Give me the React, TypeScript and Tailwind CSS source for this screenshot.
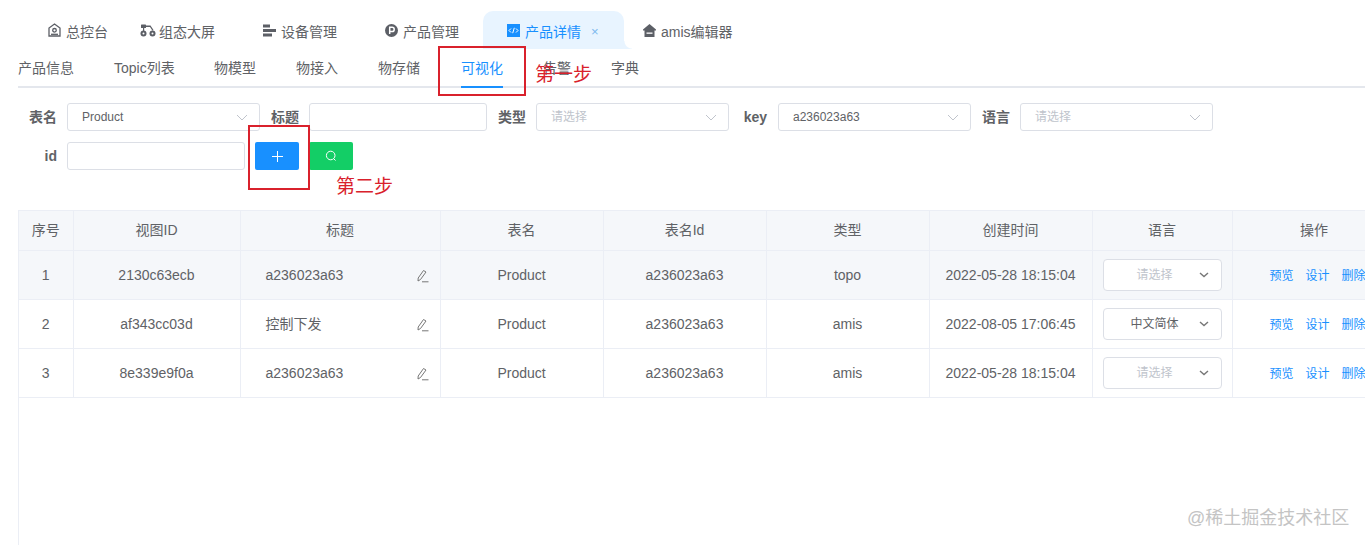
import React from "react";

const font = "[font-family:'Liberation_Sans','Noto_Sans_CJK_SC',sans-serif]";

function HomeDot() {
  return (
    <svg width="13" height="14" viewBox="0 0 13 14" fill="none" stroke="#5c5f66" strokeWidth="1.300">
      <path d="M6.500 1 12 5v8H1V5z" />
      <circle cx="6.500" cy="7.300" r="1.800" />
      <path d="M3 11.300h7" />
    </svg>
  );
}
function Topo() {
  return (
    <svg width="16" height="13" viewBox="0 0 16 13" fill="#5c5f66">
      <rect x="1" y="0.500" width="5" height="3.500" rx="0.600" />
      <path d="M3 4h1.200v3H3zM6 1.500h4.500l3 4.500-1 .7L10 3H6z" />
      <circle cx="3.500" cy="9.500" r="3" />
      <circle cx="12.500" cy="9.500" r="3" />
      <circle cx="3.500" cy="9.500" r="1" fill="#fff" />
      <circle cx="12.500" cy="9.500" r="1" fill="#fff" />
    </svg>
  );
}
function Bars() {
  return (
    <svg width="13" height="13" viewBox="0 0 13 13" fill="#5c5f66">
      <rect x="0" y="0.500" width="7" height="3" />
      <rect x="0" y="5" width="13" height="3" />
      <rect x="0" y="9.500" width="9" height="3" />
    </svg>
  );
}
function PCircle() {
  return (
    <svg width="13" height="13" viewBox="0 0 13 13">
      <circle cx="6.500" cy="6.500" r="6.500" fill="#5c5f66" />
      <path d="M4.700 10V3.300h2.400a2.100 2.100 0 0 1 0 4.200H4.700" fill="none" stroke="#fff" strokeWidth="1.500" />
    </svg>
  );
}
function CodeBox() {
  return (
    <svg width="13" height="13" viewBox="0 0 13 13">
      <rect width="13" height="13" fill="#1890ff" />
      <path d="M4 4.500 2 6.500l2 2M9 4.500l2 2-2 2M7.300 3.800 5.700 9.200" fill="none" stroke="#fff" strokeWidth="1" />
    </svg>
  );
}
function HomeFill() {
  return (
    <svg width="13" height="13" viewBox="0 0 13 13" fill="#5c5f66">
      <path d="M6.500 0 13 5.500v1H11.500V13h-10V6.500H0v-1z" />
      <rect x="3.500" y="8.500" width="6" height="1.300" fill="#fff" />
    </svg>
  );
}
function Chevron({ dark }: { dark?: boolean }) {
  return dark ? (
    <svg width="10" height="6" viewBox="0 0 10 6" fill="none" stroke="#777" strokeWidth="1.400">
      <path d="m1 1 4 3.600L9 1" />
    </svg>
  ) : (
    <svg width="12" height="7" viewBox="0 0 12 7" fill="none" stroke="#c0c4cc" strokeWidth="1">
      <path d="m1 1 5 5 5-5" />
    </svg>
  );
}
function Pencil() {
  return (
    <svg width="13" height="14" viewBox="0 0 13 14" fill="none" stroke="#777" strokeWidth="1">
      <path d="M7.500 1.500 10 3 4.500 10.500 2 12l.2-3z" />
      <path d="M6 12.800h6.500" />
    </svg>
  );
}

function Select({ value, placeholder, w }: { value?: string; placeholder?: string; w: string }) {
  return (
    <div className={`${w} h-[28px] flex items-center justify-between border border-[#dcdfe6] rounded-[3px] bg-white pl-[14px] pr-[11px] text-[12px] ${value ? "text-[#606266]" : "text-[#c0c4cc]"}`}>
      <span>{value ?? placeholder}</span>
      <Chevron />
    </div>
  );
}

function Label({ children, w }: { children: React.ReactNode; w: string }) {
  return <div className={`${w} text-right text-[14px] font-bold text-[#606266]`}>{children}</div>;
}

const rows = [
  { n: "1", id: "2130c63ecb", title: "a236023a63", type: "topo", time: "2022-05-28 18:15:04", lang: "", hl: true },
  { n: "2", id: "af343cc03d", title: "控制下发", type: "amis", time: "2022-08-05 17:06:45", lang: "中文简体", hl: false },
  { n: "3", id: "8e339e9f0a", title: "a236023a63", type: "amis", time: "2022-05-28 18:15:04", lang: "", hl: false },
];

const heads = ["序号", "视图ID", "标题", "表名", "表名Id", "类型", "创建时间", "语言", "操作"];
const cell = "border-r border-b border-[#ebeef5] text-center text-[14px] text-[#606266] p-0";
const textCell = "border-r border-b border-[#ebeef5] text-center text-[14px] text-[#606266] p-0 pt-[2px]";
const tabItem = "pt-[4px] flex items-center [&>svg]:-translate-y-[2px]";

export default function App() {
  return (
    <div className={`relative w-[1365px] h-[545px] overflow-hidden bg-white ${font}`}>
      {/* Top tabs */}
      <div className="flex h-[38px] pt-[11px] box-content items-center text-[14px] text-[#606266]">
        <div className={`ml-[48px] w-[92px] gap-[5px] ${tabItem}`}><HomeDot /><span>总控台</span></div>
        <div className={`w-[123px] gap-[3px] ${tabItem}`}><Topo /><span>组态大屏</span></div>
        <div className={`w-[122px] gap-[5px] ${tabItem}`}><Bars /><span>设备管理</span></div>
        <div className={`w-[98px] gap-[5px] ${tabItem}`}><PCircle /><span>产品管理</span></div>
        <div className={`relative w-[141px] h-[38px] gap-[5px] pl-[24px] bg-[#e8f4ff] rounded-t-[10px] text-[#1890ff] ${tabItem}`}>
          <CodeBox /><span>产品详情</span><span className="ml-[5px] text-[#7cb8ee] text-[13px]">×</span>
          <div className="absolute left-full bottom-0 w-[8px] h-[8px] bg-[radial-gradient(circle_at_100%_0%,transparent_7px,#e8f4ff_8px)]" />
        </div>
        <div className={`ml-[19px] gap-[5px] ${tabItem}`}><HomeFill /><span>amis编辑器</span></div>
      </div>

      {/* Sub tabs */}
      <div className="ml-[18px] mt-[1px] h-[38px] flex items-center border-b-2 border-[#e4e7ed] text-[14px] text-[#606266]">
        <div className="w-[96px]">产品信息</div>
        <div className="w-[100px]">Topic列表</div>
        <div className="w-[82px]">物模型</div>
        <div className="w-[82px]">物接入</div>
        <div className="w-[83px]">物存储</div>
        <div className="relative w-[82px] text-[#1890ff] h-full flex items-center">
          可视化
          <div className="absolute left-0 bottom-[-2px] w-[42px] h-[2px] bg-[#1890ff]" />
        </div>
        <div className="w-[68px]">告警</div>
        <div>字典</div>
      </div>

      {/* Filter form */}
      <div className="mt-[15px] flex items-center h-[28px]">
        <Label w="w-[57px]">表名</Label>
        <div className="ml-[10px]"><Select value="Product" w="w-[193px]" /></div>
        <Label w="w-[39px]">标题</Label>
        <div className="ml-[10px] w-[178px] h-[28px] border border-[#dcdfe6] rounded-[3px]" />
        <Label w="w-[39px]">类型</Label>
        <div className="ml-[10px]"><Select placeholder="请选择" w="w-[193px]" /></div>
        <Label w="w-[38px]">key</Label>
        <div className="ml-[11px]"><Select value="a236023a63" w="w-[193px]" /></div>
        <Label w="w-[39px]">语言</Label>
        <div className="ml-[10px]"><Select placeholder="请选择" w="w-[193px]" /></div>
      </div>
      <div className="mt-[11px] flex items-center h-[28px]">
        <Label w="w-[57px]">id</Label>
        <div className="ml-[10px] w-[178px] h-[28px] border border-[#dcdfe6] rounded-[3px]" />
        <button className="ml-[10px] w-[44px] h-[28px] rounded-[2px] bg-[#1890ff] flex items-center justify-center">
          <svg width="11" height="11" viewBox="0 0 11 11" stroke="#fff" strokeWidth="1"><path d="M5.500 0v11M0 5.500h11" /></svg>
        </button>
        <button className="ml-[10px] w-[44px] h-[28px] rounded-[2px] bg-[#13ce66] flex items-center justify-center">
          <svg width="12" height="12" viewBox="0 0 12 12" fill="none" stroke="#fff" strokeWidth="1"><circle cx="5.700" cy="5.500" r="4.300" /><path d="m8.700 8.700 1.800 1.800" /></svg>
        </button>
      </div>

      {/* Table */}
      <div className="ml-[18px] mt-[40px] w-[1400px] h-[400px] border-l border-t border-[#ebeef5]">
        <table className="table-fixed border-collapse w-[1400px]">
          <colgroup>
            <col className="w-[54px]" />
            <col className="w-[167px]" />
            <col className="w-[200px]" />
            <col className="w-[163px]" />
            <col className="w-[163px]" />
            <col className="w-[163px]" />
            <col className="w-[163px]" />
            <col className="w-[140px]" />
            <col className="w-[187px]" />
          </colgroup>
          <thead>
            <tr className="h-[39px] bg-[#f5f7fa]">
              {heads.map((h, i) => (
                <th key={h} className={`${cell} font-normal`}>
                  <span className={i === 8 ? "block w-[163px]" : ""}>{h}</span>
                </th>
              ))}
            </tr>
          </thead>
          <tbody>
            {rows.map((r) => (
              <tr key={r.n} className={`h-[49px] ${r.hl ? "bg-[#f5f7fa]" : "bg-white"}`}>
                <td className={textCell}>{r.n}</td>
                <td className={textCell}>{r.id}</td>
                <td className={textCell}>
                  <div className="flex items-center justify-between pl-[25px] pr-[11px]">
                    <span>{r.title}</span>
                    <Pencil />
                  </div>
                </td>
                <td className={textCell}>Product</td>
                <td className={textCell}>a236023a63</td>
                <td className={textCell}>{r.type}</td>
                <td className={textCell}>{r.time}</td>
                <td className={cell}>
                  <div className="mx-auto w-[119px] h-[32px] flex items-center justify-between border border-[#dcdfe6] rounded-[4px] bg-white pl-[15px] pr-[12px] text-[12px]">
                    <span className={`w-[72px] text-center ${r.lang ? "text-[#606266]" : "text-[#c0c4cc]"}`}>{r.lang || "请选择"}</span>
                    <Chevron dark />
                  </div>
                </td>
                <td className={textCell}>
                  <div className="flex gap-[12px] pl-[37px] text-[12px] text-[#1890ff]">
                    <span>预览</span><span>设计</span><span>删除</span>
                  </div>
                </td>
              </tr>
            ))}
          </tbody>
        </table>
      </div>

      {/* Screenshot annotations */}
      <div className="absolute left-[438px] top-[46px] w-[88px] h-[50px] border-2 border-[#d9212c]" />
      <div className="absolute left-[535px] top-[63px] text-[19px] leading-[24px] text-[#d9212c]">第一步</div>
      <div className="absolute left-[248px] top-[125px] w-[62px] h-[65px] border-2 border-[#d9212c]" />
      <div className="absolute left-[336px] top-[175px] text-[19px] leading-[24px] text-[#d9212c]">第二步</div>
      <div className="absolute left-[1187px] top-[507px] text-[18px] leading-[22px] text-[#c4c4c4]">@稀土掘金技术社区</div>
    </div>
  );
}
